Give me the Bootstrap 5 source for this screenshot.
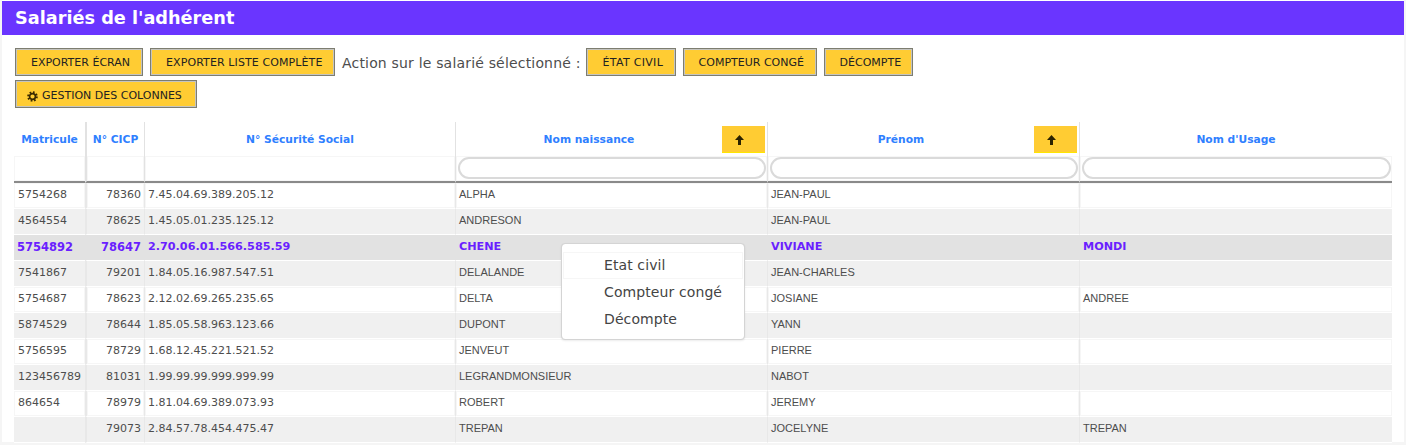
<!DOCTYPE html>
<html lang="fr">
<head>
  <meta charset="UTF-8">
  <meta name="viewport" content="width=device-width, initial-scale=1.0">
  <title>Salariés de l'adhérent</title>
  <link rel="stylesheet" href="https://cdn.jsdelivr.net/npm/bootstrap@5.3.2/dist/css/bootstrap.min.css">
  <style>
    html, body { height: 445px; overflow: hidden; }
    body { background: #f5f5f5; font-family: "DejaVu Sans", sans-serif; color: #555; }
    .cadre { margin: 0 2px; height: 442px; background: #fff; position: relative; }
    .titre-barre { background: #6a35ff; color: #fff; font-size: 17.7px; font-weight: 700; height: 35px; line-height: 34px; padding-left: 13px; border-top: 1px solid #fff; margin: 0; }
    .outils { padding: 13px 0 0 13px; column-gap: 7px; row-gap: 2px; width: 1000px; }
    .btn-jaune { background: #fc3; color: #222; font-size: 11px; line-height: 16px; height: 28px; padding: 6px 0 4px 15px; border: 1px solid #7d7d70; border-radius: 0; box-shadow: 0 0 0 1px #c4c4c0 inset; white-space: nowrap; display: inline-flex; align-items: center; gap: 4px; }
    .btn-jaune:hover { background: #fc3; color: #222; border-color: #7d7d70; }
    .b-ecran { width: 128px; }
    .b-liste { width: 185px; letter-spacing: .1px; }
    .b-civil { width: 90px; padding-left: 16px; letter-spacing: .3px; }
    .b-compteur { width: 134px; }
    .b-decompte { width: 89px; }
    .b-colonnes { width: 182px; padding-left: 11px; padding-top: 8px; }
    .action-libelle { font-size: 14px; letter-spacing: .18px; height: 28px; line-height: 31px; color: #4d4d4d; margin-right: -2px; }
    .grille-zone { padding: 14px 12px 0; }
    .grille { table-layout: fixed; width: 1378px; margin: 0; border-collapse: separate; border-spacing: 0; }
    .grille col.c-mat { width: 71px; }
    .grille col.c-cicp { width: 59px; }
    .grille col.c-ss { width: 311px; }
    .grille col.c-nom { width: 312px; }
    .grille col.c-usage { width: 313px; }
    .grille th, .grille td { padding: 0; font-size: 11px; border-bottom: 0; background: #fff; color: #4d4d4d; box-shadow: none; white-space: nowrap; overflow: hidden; }
    .grille th + th, .grille td + td { border-left: 1px solid #e2e2e2; }
    .grille th:nth-child(2), .grille td:nth-child(2) { border-left-width: 2px; }
    .entete th { height: 34px; padding-top: 1px; color: #2f80ff; font-size: 10.7px; font-weight: 700; text-align: center; vertical-align: middle; }
    .entete-flex { display: flex; align-items: center; height: 27px; padding-right: 2px; }
    .entete-flex span { flex: 1; text-align: center; padding-top: 1px; }
    .entete th:nth-child(-n+3), .entete th:last-child { padding-top: 3px; }
    .tri { width: 43px; height: 27px; background: #fc3; border: 0; border-bottom: 1px solid #ffe600; padding: 2px 9px 0 0; display: flex; align-items: center; justify-content: center; }
    .filtres th { height: 26px; padding: 1px 1px 2px 2px; border-bottom: 2px solid #8a8a8a; box-shadow: inset 0 0 0 1px #f6f6f6; vertical-align: middle; }
    .filtre-input { display: block; width: 100%; height: 22px; border: 2px solid #dadada; border-radius: 11px; padding: 0 10px; background: #fff; outline: 0; }
    .grille td { height: 26px; line-height: 22px; padding: 0 3px 1px; vertical-align: middle; border-bottom: 1px solid #fff; box-shadow: inset 0 0 0 1px #f6f6f6; }
    .grille td:first-child { padding-left: 4px; }
    .grille tr.gris td { background: #f0f0f0; box-shadow: none; }
    .grille td + td { border-left-color: #e8e8e8; }
    .grille td.nom { font-family: "Liberation Sans", Arial, sans-serif; padding-bottom: 3px; }
    .grille td.droite { text-align: right; }
    .grille tr.choisi td { background: #e2e2e2; color: #6a1fff; font-weight: 700; font-family: "DejaVu Sans", sans-serif; box-shadow: none; border-left-color: #e2e2e2; font-size: 11.2px; }
    .grille tr.choisi td:first-child, .grille tr.choisi td.droite { font-size: 11.5px; }
    .grille tr.choisi td:first-child { padding-left: 3px; }
    .menu-contexte { display: block; left: 559px; top: 243px; width: 184px; height: 97px; min-width: 0; padding: 8px 1px; border: 1px solid #d4d4d4; border-radius: 4px; box-shadow: 0 1px 2px rgba(0,0,0,.08); font-size: 14px; }
    .menu-contexte .dropdown-item { height: 27px; line-height: 27px; padding: 0 0 0 41px; color: #444; letter-spacing: .1px; font-family: "DejaVu Sans", sans-serif; }
    .menu-contexte .dropdown-item.survol { box-shadow: inset 0 0 0 1px #f6f6f6; }
  </style>
</head>
<body>
  <div class="cadre">
    <h1 class="titre-barre">Salariés de l'adhérent</h1>

    <div class="outils d-flex flex-wrap align-items-center">
      <button class="btn btn-jaune b-ecran">EXPORTER ÉCRAN</button>
      <button class="btn btn-jaune b-liste">EXPORTER LISTE COMPLÈTE</button>
      <span class="action-libelle">Action sur le salarié sélectionné :</span>
      <button class="btn btn-jaune b-civil">ÉTAT CIVIL</button>
      <button class="btn btn-jaune b-compteur">COMPTEUR CONGÉ</button>
      <button class="btn btn-jaune b-decompte">DÉCOMPTE</button>
      <div class="w-100"></div>
      <button class="btn btn-jaune b-colonnes">
        <svg width="11" height="11" viewBox="0 0 12 12"><circle cx="6" cy="6" r="4.6" fill="none" stroke="#3a2a00" stroke-width="2.4" stroke-dasharray="1.8 1.8"/><circle cx="6" cy="6" r="3.2" fill="none" stroke="#3a2a00" stroke-width="1.8"/></svg>
        GESTION DES COLONNES
      </button>
    </div>

    <div class="grille-zone">
      <table class="table grille">
        <colgroup>
          <col class="c-mat"><col class="c-cicp"><col class="c-ss"><col class="c-nom"><col class="c-nom"><col class="c-usage">
        </colgroup>
        <thead>
          <tr class="entete">
            <th>Matricule</th>
            <th>N° CICP</th>
            <th>N° Sécurité Social</th>
            <th><div class="entete-flex"><span>Nom naissance</span><button class="tri" aria-label="Trier"><svg width="9" height="10" viewBox="0 0 9 10"><path d="M4.5 0 9 5H6v5H3V5H0z" fill="#2b2200"/></svg></button></div></th>
            <th><div class="entete-flex"><span>Prénom</span><button class="tri" aria-label="Trier"><svg width="9" height="10" viewBox="0 0 9 10"><path d="M4.5 0 9 5H6v5H3V5H0z" fill="#2b2200"/></svg></button></div></th>
            <th>Nom d'Usage</th>
          </tr>
          <tr class="filtres">
            <th></th>
            <th></th>
            <th></th>
            <th><input class="filtre-input" type="text"></th>
            <th><input class="filtre-input" type="text"></th>
            <th><input class="filtre-input" type="text"></th>
          </tr>
        </thead>
        <tbody>
          <tr><td>5754268</td><td class="droite">78360</td><td>7.45.04.69.389.205.12</td><td class="nom">ALPHA</td><td class="nom">JEAN-PAUL</td><td class="nom"></td></tr>
          <tr class="gris"><td>4564554</td><td class="droite">78625</td><td>1.45.05.01.235.125.12</td><td class="nom">ANDRESON</td><td class="nom">JEAN-PAUL</td><td class="nom"></td></tr>
          <tr class="choisi"><td>5754892</td><td class="droite">78647</td><td>2.70.06.01.566.585.59</td><td>CHENE</td><td>VIVIANE</td><td>MONDI</td></tr>
          <tr class="gris"><td>7541867</td><td class="droite">79201</td><td>1.84.05.16.987.547.51</td><td class="nom">DELALANDE</td><td class="nom">JEAN-CHARLES</td><td class="nom"></td></tr>
          <tr><td>5754687</td><td class="droite">78623</td><td>2.12.02.69.265.235.65</td><td class="nom">DELTA</td><td class="nom">JOSIANE</td><td class="nom">ANDREE</td></tr>
          <tr class="gris"><td>5874529</td><td class="droite">78644</td><td>1.85.05.58.963.123.66</td><td class="nom">DUPONT</td><td class="nom">YANN</td><td class="nom"></td></tr>
          <tr><td>5756595</td><td class="droite">78729</td><td>1.68.12.45.221.521.52</td><td class="nom">JENVEUT</td><td class="nom">PIERRE</td><td class="nom"></td></tr>
          <tr class="gris"><td>123456789</td><td class="droite">81031</td><td>1.99.99.99.999.999.99</td><td class="nom">LEGRANDMONSIEUR</td><td class="nom">NABOT</td><td class="nom"></td></tr>
          <tr><td>864654</td><td class="droite">78979</td><td>1.81.04.69.389.073.93</td><td class="nom">ROBERT</td><td class="nom">JEREMY</td><td class="nom"></td></tr>
          <tr class="gris"><td></td><td class="droite">79073</td><td>2.84.57.78.454.475.47</td><td class="nom">TREPAN</td><td class="nom">JOCELYNE</td><td class="nom">TREPAN</td></tr>
        </tbody>
      </table>
    </div>

    <ul class="dropdown-menu menu-contexte">
      <li><a class="dropdown-item survol" href="#">Etat civil</a></li>
      <li><a class="dropdown-item" href="#">Compteur congé</a></li>
      <li><a class="dropdown-item" href="#">Décompte</a></li>
    </ul>
  </div>

  <script src="https://cdn.jsdelivr.net/npm/bootstrap@5.3.2/dist/js/bootstrap.bundle.min.js"></script>
</body>
</html>
